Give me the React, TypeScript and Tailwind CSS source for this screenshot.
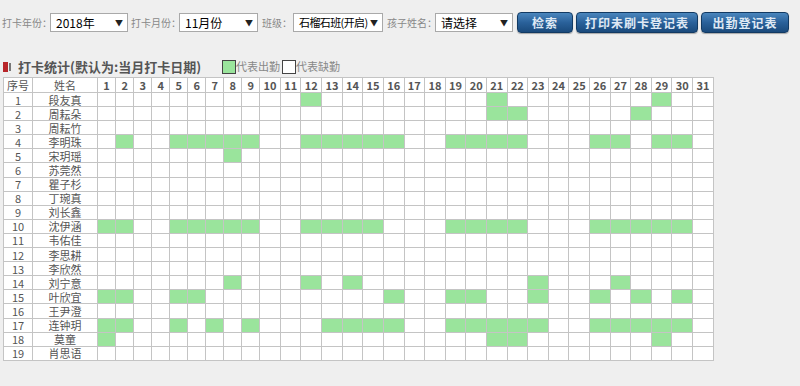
import React from "react";

const DAYS = Array.from({ length: 31 }, (_, i) => i + 1);

const STUDENTS: { name: string; present: number[] }[] = [
  { name: "段友真", present: [12, 21, 29] },
  { name: "周耘朵", present: [21, 22, 28] },
  { name: "周耘竹", present: [] },
  { name: "李明珠", present: [2, 5, 6, 7, 8, 9, 12, 13, 14, 15, 16, 19, 20, 21, 22, 26, 27, 29, 30] },
  { name: "宋玥瑶", present: [8] },
  { name: "苏莞然", present: [] },
  { name: "瞿子杉", present: [] },
  { name: "丁琬真", present: [] },
  { name: "刘长鑫", present: [] },
  { name: "沈伊涵", present: [1, 2, 5, 6, 7, 8, 9, 12, 13, 14, 15, 19, 20, 21, 22, 26, 27, 28, 29, 30] },
  { name: "韦佑佳", present: [] },
  { name: "李思耕", present: [] },
  { name: "李欣然", present: [] },
  { name: "刘宁意", present: [8, 12, 14, 23, 27] },
  { name: "叶欣宜", present: [1, 2, 5, 6, 16, 19, 20, 23, 26, 28, 30] },
  { name: "王尹澄", present: [] },
  { name: "连钟玥", present: [1, 2, 5, 7, 9, 13, 14, 15, 16, 19, 20, 21, 22, 23, 26, 27, 28, 29, 30] },
  { name: "莫童", present: [1, 21, 22, 29] },
  { name: "肖思语", present: [] },
];

const FONT = "[font-family:'Noto_Sans_CJK_SC','Liberation_Sans',sans-serif]";

function Select({ value, width, small }: { value: string; width: string; small?: boolean }) {
  return (
    <div
      className={`flex h-[19px] shrink-0 items-center justify-between border border-[#a9a9a9] bg-white pl-[5px] pr-[4px] leading-none text-black ${width}`}
    >
      <span className={`whitespace-nowrap ${small ? "text-[11px] tracking-[-0.6px]" : "text-[12px]"}`}>
        {value}
      </span>
      <span className="text-[8px] text-[#222]">▼</span>
    </div>
  );
}

function Label({ children }: { children: React.ReactNode }) {
  return (
    <span className="mr-[-2px] shrink-0 whitespace-nowrap text-[10px] leading-none text-[#888]">
      {children}
    </span>
  );
}

function BlueButton({ children, width }: { children: React.ReactNode; width: string }) {
  return (
    <button
      className={`flex h-[21px] shrink-0 items-center justify-center rounded-[4px] border border-[#123a63] bg-gradient-to-b from-[#4a86bd] via-[#2a619a] to-[#1a4a7c] text-[12px] font-bold tracking-[1px] text-[#dfe9f4] shadow-[0_1px_1px_rgba(0,0,0,0.3)] ${width}`}
    >
      {children}
    </button>
  );
}

export default function App() {
  return (
    <div className={`h-[386px] w-[800px] overflow-hidden bg-[#efefef] ${FONT}`}>
      {/* Toolbar */}
      <div className="flex items-center pl-[2px] pt-[12px]">
        <Label>打卡年份：</Label>
        <Select value="2018年" width="w-[78px]" />
        <div className="w-[3px]" />
        <Label>打卡月份：</Label>
        <Select value="11月份" width="w-[79px]" />
        <div className="w-[4px]" />
        <Label>班级：</Label>
        <div className="w-[3px]" />
        <Select value="石榴石班(开启)" width="w-[90px]" small />
        <div className="w-[4px]" />
        <Label>孩子姓名：</Label>
        <Select value="请选择" width="w-[78px]" />
        <div className="ml-[4px] flex gap-[3px]">
          <BlueButton width="w-[56px]">检索</BlueButton>
          <BlueButton width="w-[122px]">打印未刷卡登记表</BlueButton>
          <BlueButton width="w-[88px]">出勤登记表</BlueButton>
        </div>
      </div>

      {/* Title + legend */}
      <div className="mt-[23px] flex h-[21px] items-center pl-[3px]">
        <span className="h-[10px] w-[5px] bg-[#b8262a]" />
        <span className="ml-[1px] h-[8px] w-[2px] bg-[#777]" />
        <span className="ml-[7px] whitespace-nowrap text-[13px] font-bold leading-none text-[#555]">
          打卡统计(默认为:当月打卡日期)
        </span>
        <span className="ml-[21px] h-[14px] w-[14px] border border-[#444] bg-[#9ae49c]" />
        <span className="whitespace-nowrap text-[11px] leading-none text-[#888]">代表出勤</span>
        <span className="ml-[2px] h-[14px] w-[14px] border border-[#444] bg-white" />
        <span className="whitespace-nowrap text-[11px] leading-none text-[#888]">代表缺勤</span>
      </div>

      {/* Table */}
      <div className="pl-[3px]">
        <table className="w-[711px] table-fixed border-collapse bg-white text-center text-[11px] leading-[12px] text-[#555]">
          <colgroup>
            <col className="w-[29px]" />
            <col className="w-[65px]" />
            {DAYS.map((d) => (
              <col key={d} className={d < 10 ? "w-[18px]" : "w-[20.6px]"} />
            ))}
          </colgroup>
          <thead>
            <tr className="h-[15px]">
              <th className="border border-[#c4c4c4] p-0 font-normal">序号</th>
              <th className="border border-[#c4c4c4] p-0 font-normal">姓名</th>
              {DAYS.map((d) => (
                <th key={d} className="border border-[#c4c4c4] p-0 font-bold">
                  {d}
                </th>
              ))}
            </tr>
          </thead>
          <tbody>
            {STUDENTS.map((s, i) => (
              <tr key={s.name} className="h-[14.1px]">
                <td className="border border-[#c4c4c4] p-0">{i + 1}</td>
                <td className="border border-[#c4c4c4] p-0">{s.name}</td>
                {DAYS.map((d) => (
                  <td
                    key={d}
                    className={`border border-[#c4c4c4] p-0 ${
                      s.present.includes(d) ? "bg-[#9ae49c]" : "bg-white"
                    }`}
                  />
                ))}
              </tr>
            ))}
          </tbody>
        </table>
      </div>
    </div>
  );
}
